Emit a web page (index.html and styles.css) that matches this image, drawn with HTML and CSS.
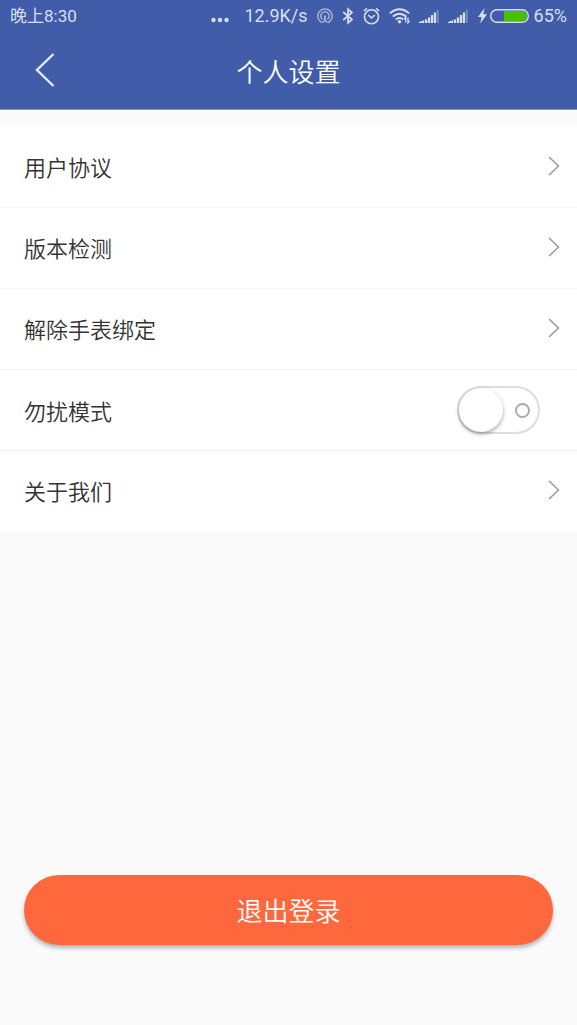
FILE: index.html
```html
<!DOCTYPE html>
<html lang="zh-CN">
<head>
<meta charset="utf-8">
<meta name="viewport" content="width=device-width, initial-scale=1">
<title>个人设置</title>
<link rel="stylesheet" href="styles.css">
</head>
<body>
<header class="header">
  <div class="status">
    <span class="time">晚上8:30</span>
    <svg class="dots" width="18" height="6" viewBox="0 0 18 6" fill="currentColor"><circle cx="2.5" cy="3" r="2.2"/><circle cx="9" cy="3" r="2.2"/><circle cx="15.5" cy="3" r="2.2"/></svg>
    <span class="speed">12.9K/s</span>
    <svg class="hotspot" width="16" height="18" viewBox="0 0 16 18" fill="none" stroke="currentColor" stroke-width="1.5"><path d="M5 15.8A7.2 7.2 0 1 1 11 15.8M5.6 12.4A4.2 4.2 0 1 1 10.4 12.4"/><path stroke-width="2" d="M8 8.5v4.5"/><path d="M5.6 15.6L8 13.2l2.4 2.4"/></svg>
    <svg width="12" height="18" viewBox="0 0 12 18" fill="none" stroke="currentColor" stroke-width="1.7"><path d="M1.2 5L10 12.5L6 16V2L10 5.5L1.2 13"/></svg>
    <svg width="17" height="18" viewBox="0 0 17 18" fill="none" stroke="currentColor" stroke-width="1.6"><circle cx="8.5" cy="9.8" r="7"/><path d="M5.2 8l3.3 3 3.3-3M.8 4L4 1.3M16.2 4L13 1.3"/></svg>
    <svg width="21" height="18" viewBox="0 0 21 18" fill="none" stroke="currentColor" stroke-width="1.9"><path d="M.8 6.4Q10.5-2 20.2 6.4M3.8 9.6Q10.5 4 17.2 9.6M6.8 12.6Q10.5 9.6 14.2 12.6"/><circle cx="10.5" cy="14.8" r="1.7" fill="currentColor" stroke="none"/><path stroke-width="1.3" d="M16.7 15.5v-5.3l-1.6 1.8M19 10.5v5.3l1.6-1.8"/></svg>
    <svg width="20" height="18" viewBox="0 0 20 18" fill="currentColor"><path d="M0 16V15L5 13.2V16zM5.8 12.5h2.4V16H5.8zM8.9 10.5h2.3V16H8.9zM11.9 8h2.3v8h-2.3zM14.9 5.5h2.2V16h-2.2z"/><path opacity=".35" d="M17.7 3h2v13h-2z"/></svg>
    <svg width="20" height="18" viewBox="0 0 20 18" fill="currentColor"><path d="M0 16V15L5 13.2V16zM5.8 12.5h2.4V16H5.8zM8.9 10.5h2.3V16H8.9zM11.9 8h2.3v8h-2.3zM14.9 5.5h2.2V16h-2.2z"/><path opacity=".35" d="M17.7 3h2v13h-2z"/></svg>
    <span class="power">
      <svg width="51" height="18" viewBox="0 0 51 18"><path fill="currentColor" d="M6.5 1L0 10h3.5L2.3 16.5L9 7.3H5.3z"/><rect x="12.7" y="2.7" width="37.6" height="12.6" rx="6.3" fill="none" stroke="currentColor" stroke-width="1.4"/><path fill="#48c000" d="M26 4h18a5 5 0 0 1 0 10H26z"/></svg>
      <span>65%</span>
    </span>
  </div>
  <div class="bar">
    <button class="back" type="button" aria-label="返回"><svg width="20" height="34" viewBox="0 0 20 34" fill="none" stroke="currentColor" stroke-width="2.4"><path d="M18.5 1L2 17l16.5 16"/></svg></button>
    <h1 class="title">个人设置</h1>
  </div>
</header>
<main class="main">
  <nav class="list">
    <a class="row" href="#agreement">用户协议<svg class="chevron" width="12" height="20" viewBox="0 0 12 20"><path d="M1 1l9.5 9L1 19"/></svg></a>
    <a class="row" href="#version">版本检测<svg class="chevron" width="12" height="20" viewBox="0 0 12 20"><path d="M1 1l9.5 9L1 19"/></svg></a>
    <a class="row" href="#unbind">解除手表绑定<svg class="chevron" width="12" height="20" viewBox="0 0 12 20"><path d="M1 1l9.5 9L1 19"/></svg></a>
    <label class="row row-switch" for="quiet">勿扰模式<input class="switch" id="quiet" type="checkbox" role="switch"></label>
    <a class="row" href="#about">关于我们<svg class="chevron" width="12" height="20" viewBox="0 0 12 20"><path d="M1 1l9.5 9L1 19"/></svg></a>
  </nav>
  <button class="logout" type="button">退出登录</button>
</main>
</body>
</html>
```
FILE: styles.css
```css
*,
*::before,
*::after {
  box-sizing: border-box;
}

body {
  margin: 0;
  min-height: 100vh;
  display: flex;
  flex-direction: column;
  background: #fafafa;
  color: #333;
  font-family: "Noto Sans CJK SC", sans-serif;
}

svg {
  display: block;
  flex: none;
}

.header {
  background: #415ca8;
  border-bottom: 1px solid #8c94ae;
  color: #fff;
}

.status {
  display: flex;
  align-items: center;
  gap: 9px;
  height: 32px;
  padding: 0 10px;
  color: #d9dff0;
  font-family: Roboto, "Noto Sans CJK SC", sans-serif;
  font-size: 18px;
  line-height: 32px;
  white-space: nowrap;
}

.time {
  margin-right: auto;
  font-size: 17px;
}

.dots {
  margin: 8px 6px 0 0;
}

.hotspot {
  opacity: 0.65;
}

.power {
  display: flex;
  align-items: center;
  gap: 5px;
  margin-left: 1px;
}

.bar {
  display: grid;
  grid-template-columns: 90px 1fr 90px;
  align-items: center;
  height: 77px;
}

.back {
  display: flex;
  justify-content: center;
  padding: 12px 0 14px;
  border: 0;
  background: none;
  color: #e6eaf5;
}

.title {
  margin: 0;
  font-size: 26px;
  font-weight: 350;
  line-height: 40px;
  text-align: center;
}

.main {
  flex: 1;
  display: flex;
  flex-direction: column;
  padding-top: 16px;
}

.list {
  padding-bottom: 1px;
  background: #fff;
}

.row {
  display: flex;
  align-items: center;
  justify-content: space-between;
  height: 81px;
  padding: 0 17px 2px 24px;
  color: #333;
  font-size: 22px;
  font-weight: 350;
  line-height: 32px;
  text-decoration: none;
}

.row + .row {
  border-top: 1px solid #f1f3f8;
}

.row-switch {
  padding: 0 37px 0 24px;
}

.chevron {
  fill: none;
  stroke: #999;
  stroke-width: 1.5;
}

.switch {
  appearance: none;
  display: flex;
  align-items: center;
  justify-content: space-between;
  width: 83px;
  height: 48px;
  margin: 0;
  padding-right: 8px;
  border: 2px solid #ddd;
  border-radius: 24px;
  background: #fff;
}

.switch::before {
  content: "";
  width: 44px;
  height: 44px;
  border-radius: 50%;
  background: #fff;
  box-shadow: 0 2px 4px rgba(0, 0, 0, 0.35);
}

.switch::after {
  content: "";
  width: 15px;
  height: 15px;
  border: 2px solid #aaa;
  border-radius: 50%;
}

.switch:checked {
  flex-direction: row-reverse;
  padding: 0 0 0 8px;
  background: #415ca8;
}

.logout {
  height: 70px;
  margin: auto 24px 80px;
  padding: 0 0 2px;
  border: 0;
  border-radius: 35px;
  background: #ff673c;
  box-shadow: 0 3px 4px rgba(0, 0, 0, 0.28);
  color: #fff;
  font: inherit;
  font-size: 26px;
  font-weight: 350;
}
```
